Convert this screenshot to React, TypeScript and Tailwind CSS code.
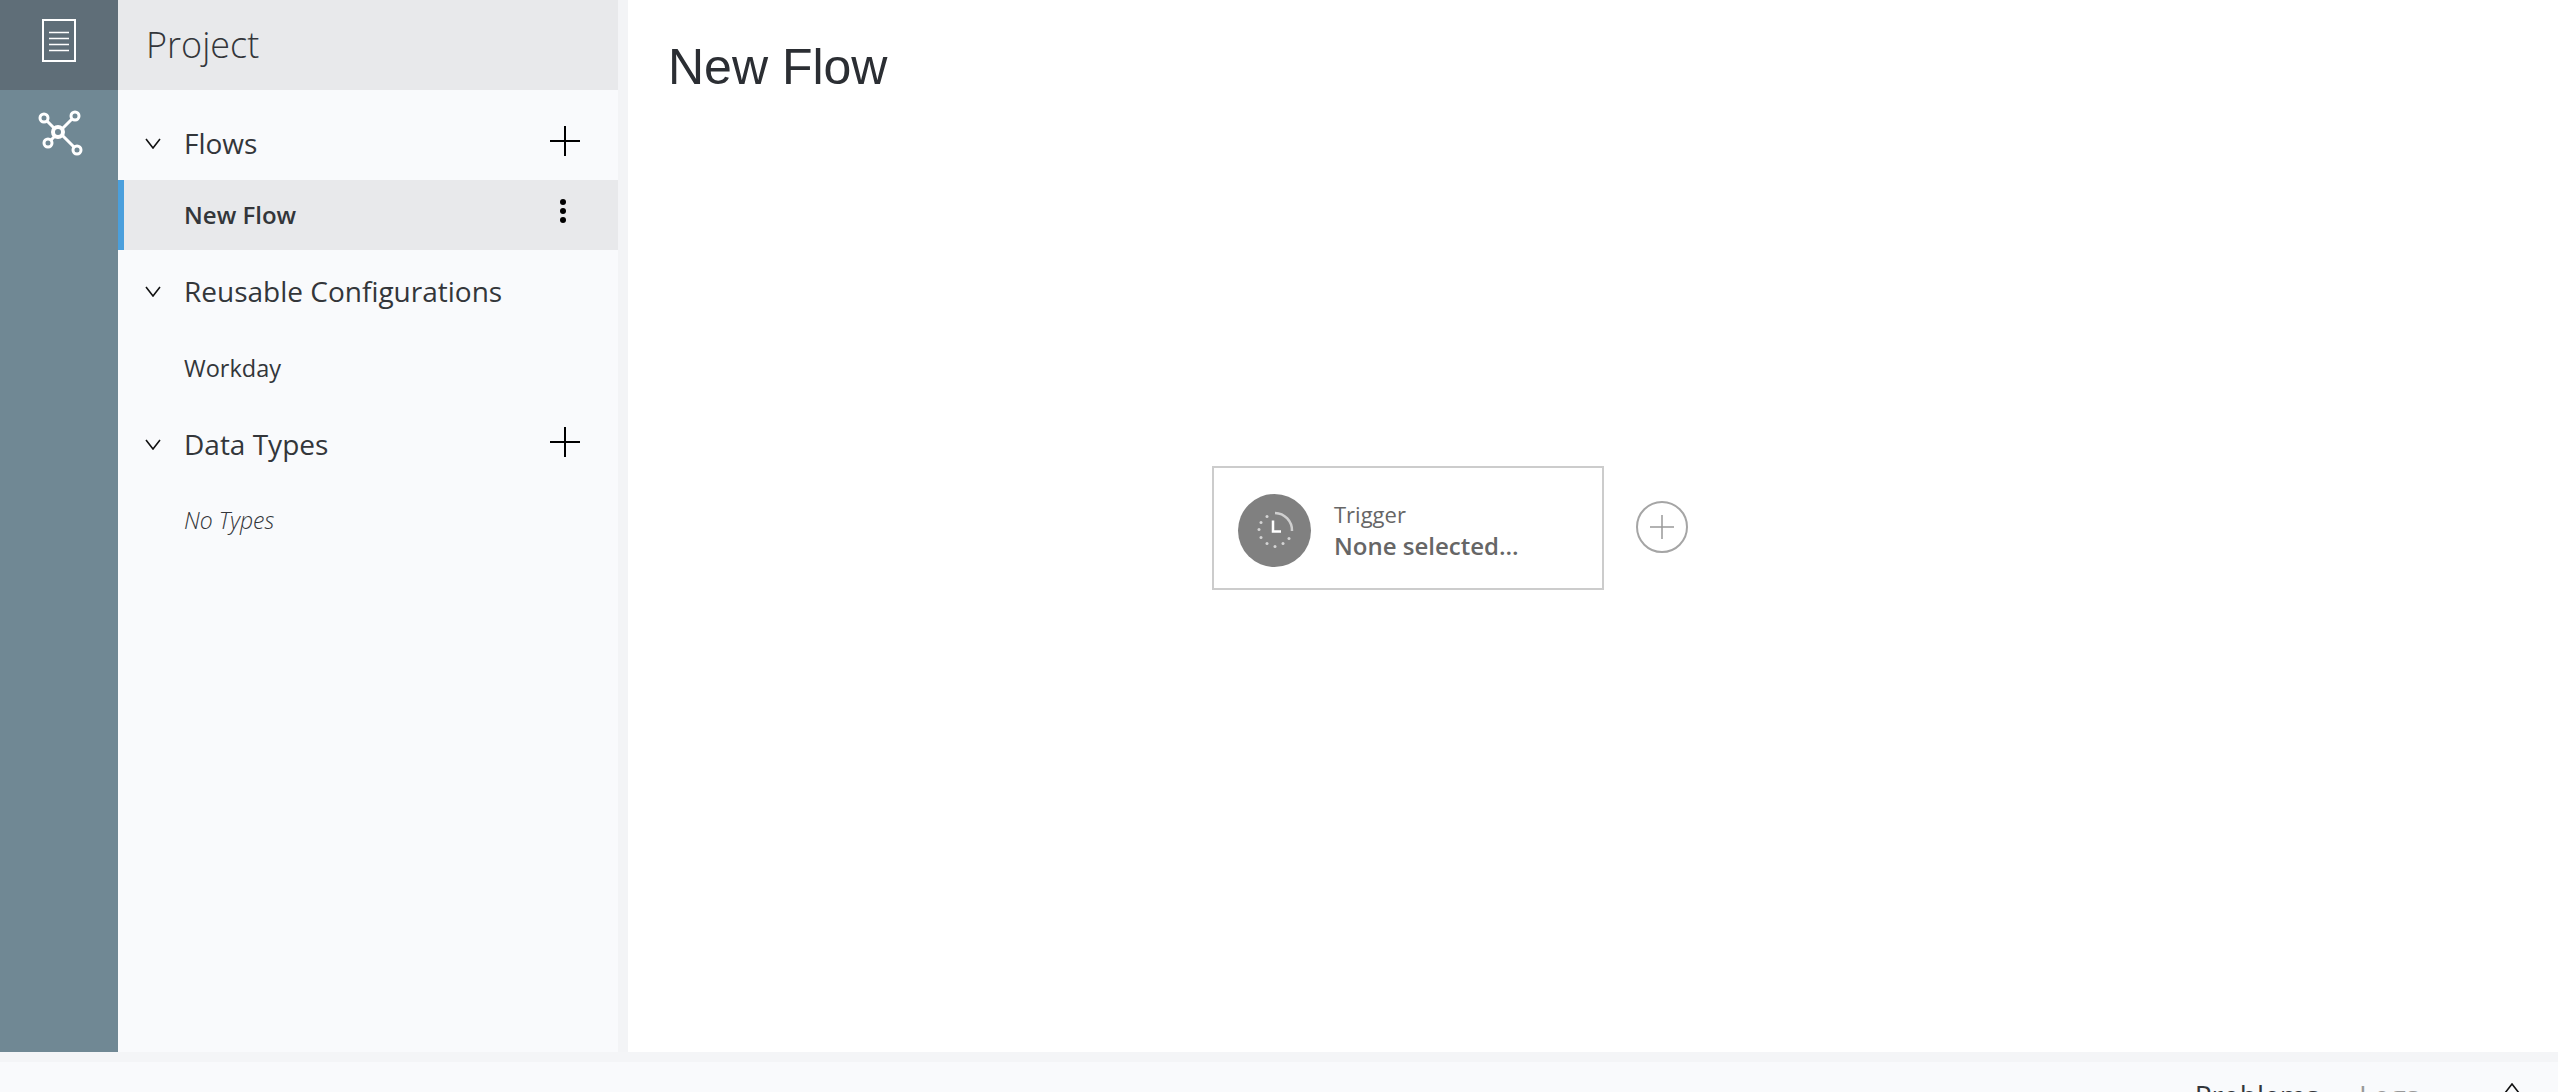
function PlusIcon() {
  return (
    <svg className="mb-[4px]" width="30" height="30" viewBox="0 0 30 30" aria-hidden="true">
      <path d="M15 0V30M0 15H30" stroke="#000" strokeWidth="2" fill="none" />
    </svg>
  )
}

function ChevronIcon() {
  return (
    <svg width="16" height="11" viewBox="0 0 16 11" aria-hidden="true">
      <path d="M1 1L8 10L15 1" stroke="#111" strokeWidth="1.6" fill="none" />
    </svg>
  )
}

function DocIcon() {
  return (
    <svg width="34" height="43" viewBox="0 0 34 43" aria-hidden="true">
      <rect x="1" y="1" width="32" height="41" stroke="white" strokeWidth="2" fill="none" />
      <path d="M7 13.5H27M7 19.5H27M7 25.5H27M7 31.5H27" stroke="white" strokeWidth="1.6" />
    </svg>
  )
}

function NetworkIcon() {
  return (
    <svg width="48" height="48" viewBox="0 0 48 48" fill="none" stroke="white" aria-hidden="true">
      <path d="M12 13L20 21M37 11L27 21M16 32L20 28M39 39L27 27" strokeWidth="3" />
      <circle cx="23" cy="24" r="5" strokeWidth="4" />
      <circle cx="9" cy="10" r="4" strokeWidth="3" />
      <circle cx="40" cy="8" r="4" strokeWidth="3" />
      <circle cx="13" cy="35" r="4" strokeWidth="3" />
      <circle cx="42" cy="42" r="4" strokeWidth="3" />
    </svg>
  )
}

function ClockIcon() {
  const dots = [
    [12, 5.5],
    [6, 11.5],
    [4, 18.5],
    [6, 26.5],
    [12, 32.5],
    [20, 35.5],
    [28, 32.5],
    [34, 27.5],
  ]
  return (
    <svg width="40" height="38" viewBox="0 0 40 38" aria-hidden="true">
      <path d="M20 2A17.5 17.5 0 0 1 37 20" stroke="#cfcfcf" strokeWidth="2.5" fill="none" />
      {dots.map(([cx, cy]) => (
        <circle key={`${cx}-${cy}`} cx={cx} cy={cy} r="1.5" fill="#d4d4d4" />
      ))}
      <path d="M18 9.5V20.5H26" stroke="white" strokeWidth="2.5" fill="none" />
    </svg>
  )
}

function SectionRow({ title, plus, className }: { title: string; plus?: boolean; className?: string }) {
  return (
    <div className={`flex h-[60px] items-center pl-[27px] pr-[38px] ${className ?? ''}`}>
      <ChevronIcon />
      <span className="ml-[23px] flex-1 text-[28px] text-[#33363a]">{title}</span>
      {plus && <PlusIcon />}
    </div>
  )
}

export default function App() {
  return (
    <div className="flex h-[1092px] w-[2558px] flex-col overflow-hidden bg-[#f4f5f7] font-['Open_Sans',sans-serif]">
      <div className="flex h-[1052px] shrink-0">
        {/* icon rail */}
        <div className="flex w-[118px] flex-col items-center bg-[#708894]">
          <div className="flex h-[90px] w-full items-center justify-center bg-[#5f6e78] pb-[9px]">
            <DocIcon />
          </div>
          <div className="mt-[18px]">
            <NetworkIcon />
          </div>
        </div>

        {/* project tree */}
        <div className="w-[500px] bg-[#f9fafc]">
          <div className="flex h-[90px] items-center bg-[#e8e9eb] pl-[28px] text-[36px] font-[350] text-[#33363a]">
            Project
          </div>
          <SectionRow title="Flows" plus className="mt-[23px]" />
          <div className="mt-[7px] flex h-[70px] items-center border-l-[6px] border-[#4a9fdc] bg-[#e8e9eb] pl-[60px] pr-[52px]">
            <span className="flex-1 text-[24px] font-[550] text-[#33363a]">New Flow</span>
            <div className="mb-[8px] flex flex-col gap-[3px]">
              <span className="size-[6px] rounded-full bg-black" />
              <span className="size-[6px] rounded-full bg-black" />
              <span className="size-[6px] rounded-full bg-black" />
            </div>
          </div>
          <SectionRow title="Reusable Configurations" className="mt-[11px]" />
          <div className="mt-[13px] flex h-[70px] items-center pl-[66px] text-[23.5px] text-[#33363a]">Workday</div>
          <SectionRow title="Data Types" plus className="mt-[10px]" />
          <div className="mt-[11px] flex h-[70px] items-center pl-[66px] text-[23px] font-light italic text-[#33363a]">
            No Types
          </div>
        </div>

        <div className="w-[10px] bg-[#f3f4f6]" />

        {/* flow canvas */}
        <div className="flex-1 bg-white">
          <h1 className="pl-[40px] pt-[37px] font-['Liberation_Sans',sans-serif] text-[50px] leading-[60px] text-[#2b2e33]">
            New Flow
          </h1>
          <div className="mt-[369px] ml-[584px] flex items-center">
            <div className="flex h-[124px] w-[392px] items-center border-2 border-[#cccccc] pl-[24px]">
              <div className="mt-[4px] flex size-[73px] items-center justify-center rounded-full bg-[#808080]">
                <ClockIcon />
              </div>
              <div className="ml-[23px] mt-[6px] text-[#666666]">
                <div className="text-[22px] leading-[30px]">Trigger</div>
                <div className="text-[24px] font-semibold leading-[34px]">None selected...</div>
              </div>
            </div>
            <div className="ml-[32px] mb-[2px] flex size-[52px] items-center justify-center rounded-full border-2 border-[#a5a5a5]">
              <svg width="24" height="24" viewBox="0 0 24 24" aria-hidden="true">
                <path d="M12 0V24M0 12H24" stroke="#999999" strokeWidth="1.5" fill="none" />
              </svg>
            </div>
          </div>
        </div>
      </div>

      {/* bottom panel, cut off by the window */}
      <div className="mt-[10px] flex flex-1 items-start justify-end bg-[#f9fafc] pt-[13px] pr-[38px]">
        <span className="text-[28px] leading-[40px] text-[#33363a]">Problems</span>
        <span className="ml-[40px] text-[28px] leading-[40px] text-[#999999]">Logs</span>
        <svg className="ml-[85px] mt-[8px]" width="16" height="11" viewBox="0 0 16 11" aria-hidden="true">
          <path d="M1 10L8 1L15 10" stroke="#111" strokeWidth="1.6" fill="none" />
        </svg>
      </div>
    </div>
  )
}
